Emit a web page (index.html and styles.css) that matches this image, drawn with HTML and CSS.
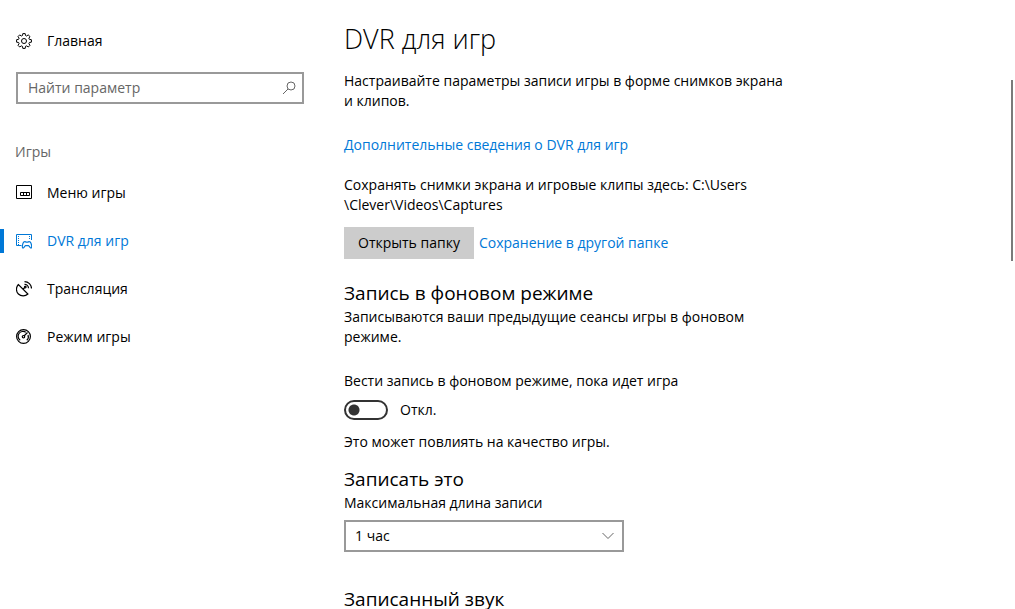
FILE: index.html
```
<!DOCTYPE html>
<html lang="ru">
<head>
    <meta charset="UTF-8">
    <title>Параметры</title>
    <link rel="stylesheet" href="styles.css">
</head>
<body>
<div class="wrap">
    <div class="side">
        <a href="#" class="item">
            <svg class="icon" viewBox="0 0 16 16"><path d="M6.8.6h2.4l.3 1.9 1.1.5 1.6-1.1 1.8 1.7-1.1 1.6.4 1.1 2.1.4v2.5l-2 .3-.5 1.2 1.1 1.6-1.7 1.7-1.6-1.1-1.2.4-.3 2.1H6.8l-.3-2-1.2-.5L3.7 14 2 12.300l1.100-1.600-.500-1.200-2-.300V6.700l2-.400.500-1.100L2 3.600l1.700-1.700L5.300 3l1.200-.5z"/><circle cx="8" cy="8" r="2.500"/></svg>
            <span>Главная</span>
        </a>
        <div class="search">
            <input type="text" placeholder="Найти параметр" aria-label="Найти параметр">
            <button type="button" aria-label="Поиск">
                <svg viewBox="0 0 14 14"><circle cx="9" cy="5" r="4"/><path d="M6 8L1 13"/></svg>
            </button>
        </div>
        <h3>Игры</h3>
        <ul>
            <li><a href="#" class="item">
                <svg class="icon" viewBox="0 0 16 16"><path d="M.5.5h15v13H.5zM4.500 7.500h9v3h-9zM7.500 7.500v3M10.500 7.500v3"/></svg>
                <span>Меню игры</span>
            </a></li>
            <li><a href="#" class="item on" aria-current="page">
                <svg class="icon" viewBox="0 0 16 16"><path d="M5.500 12.500H.5v-11h15V7"/><path d="M2.500 3v9M13.500 3v4" stroke-dasharray="1 1"/><path stroke-width="1.200" d="M6.800 15c-.9-.5-.3-4.800 1-6 .7-.6 1.700-.5 2.200.1h2c.5-.6 1.500-.7 2.200-.1 1.300 1.200 1.900 5.500 1 6-1 .4-1.800-2.100-2.700-2.300h-3c-.9.200-1.700 2.700-2.700 2.300z"/></svg>
                <span>DVR для игр</span>
            </a></li>
            <li><a href="#" class="item">
                <svg class="icon" viewBox="0 0 16 16" stroke-width="1.200"><path d="M2.400 3.500A6.700 6.700 0 0 0 11.900 13zM7 8.200L9 6.300M8.500 3.300a4 4 0 0 1 4 4M8.500.6a7 7 0 0 1 7 7"/><circle cx="9.300" cy="6.100" r=".8"/></svg>
                <span>Трансляция</span>
            </a></li>
            <li><a href="#" class="item">
                <svg class="icon" viewBox="0 0 16 16" stroke-width="1.200"><circle cx="7.500" cy="7.500" r="6.900"/><path d="M4.200 11.300A4.800 4.800 0 0 1 9.800 3.300M12 6A4.800 4.800 0 0 1 10.800 11.300M8 7l3.500-3.500"/><circle cx="7.500" cy="7.700" r="1.200"/></svg>
                <span>Режим игры</span>
            </a></li>
        </ul>
    </div>
    <div class="main">
        <h1>DVR для игр</h1>
        <p>Настраивайте параметры записи игры в форме снимков экрана и клипов.</p>
        <p class="more"><a href="#">Дополнительные сведения о DVR для игр</a></p>
        <p>Сохранять снимки экрана и игровые клипы здесь: C:\Users<wbr>\Clever\Videos\Captures</p>
        <div class="folder">
            <button type="button">Открыть папку</button>
            <a href="#">Сохранение в другой папке</a>
        </div>

        <h2>Запись в фоновом режиме</h2>
        <p>Записываются ваши предыдущие сеансы игры в фоновом режиме.</p>
        <label class="cap" for="bg">Вести запись в фоновом режиме, пока идет игра</label>
        <div class="toggle">
            <input type="checkbox" role="switch" id="bg">
            <span>Откл.</span>
        </div>
        <p>Это может повлиять на качество игры.</p>

        <h2 class="rec">Записать это</h2>
        <label for="len">Максимальная длина записи</label>
        <div class="select">
            <select id="len">
                <option>30 минут</option>
                <option selected>1 час</option>
                <option>2 часа</option>
            </select>
            <svg viewBox="0 0 12 8"><path d="M.5 1L6 6.500 11.500 1"/></svg>
        </div>

        <h2 class="last">Записанный звук</h2>
    </div>
    <div class="bar"></div>
</div>
</body>
</html>
```
FILE: styles.css
```
/* reset */
body,button,h1,h2,h3,input,p,select,ul{margin:0;padding:0}
body,button,input,select{font:14px/20px "Open Sans", "Noto Sans", sans-serif;color:#000;}
ul{list-style:none}
a{color:#0078d7;text-decoration:none}
button,input,select{box-sizing:border-box;border:0;border-radius:0;background:none;}
svg{fill:none;stroke:currentColor;}
body{background:#fff;}

.wrap{
    display:flex;
    height:100vh;
    overflow:hidden;
    position:relative;
}

/* left menu */
.side{
    width:320px;
    flex:none;
    padding-top:17px;
}
.item{
    display:flex;
    align-items:center;
    gap:15px;
    height:48px;
    padding-left:16px;
    color:#000;
}
.icon{
    width:16px;
    height:16px;
}
.item.on{
    color:#0078d7;
    background:linear-gradient(#0078d7,#0078d7) left center / 4px 24px no-repeat;
}
.search{
    display:flex;
    height:28px;
    margin:7px 16px 38px;
    border:2px solid #999;
}
.search input{
    flex:1;
    min-width:0;
    padding-left:10px;
}
.search input::placeholder{
    color:#666;
    opacity:1;
}
.search button{
    display:flex;
    align-items:center;
    justify-content:center;
    width:26px;
    color:#666;
}
.search svg{
    width:14px;
    height:14px;
}
.side h3{
    margin:0 15px 7px;
    font-size:14px;
    font-weight:400;
    color:#666;
}

/* page */
.main{
    flex:1;
    padding:21px 24px 0;
}
.main p{
    max-width:448px;
}
h1{
    margin-bottom:14px;
    font-size:27px;
    line-height:36px;
    font-weight:300;
}
h2{
    margin:22px 0 2px;
    font-size:19px;
    line-height:24px;
    font-weight:400;
}
.main .more{
    margin:24px 0 20px;
}
.folder{
    display:flex;
    align-items:center;
    gap:5px;
    margin-top:12px;
}
.folder button{
    height:32px;
    padding:0 14px;
    background:#ccc;
}
label{
    display:block;
}
.cap{
    margin-top:24px;
}
.toggle{
    display:flex;
    align-items:center;
    gap:12px;
    margin:9px 0 12px;
}
.toggle input{
    appearance:none;
    width:44px;
    height:20px;
    border:2px solid #333;
    border-radius:10px;
    background:radial-gradient(circle at 8px 8px,#333 5px,transparent 6px);
}
.toggle input:checked{
    background:radial-gradient(circle at 32px 8px,#333 5px,transparent 6px);
}
.rec{
    margin-top:15px;
}
.select{
    position:relative;
    width:280px;
    margin-top:7px;
}
.select select{
    appearance:none;
    display:block;
    width:100%;
    height:32px;
    padding-left:9px;
    border:2px solid #999;
}
.select svg{
    position:absolute;
    right:10px;
    top:12px;
    width:12px;
    height:8px;
    color:#666;
    pointer-events:none;
}
.last{
    margin-top:35px;
}

/* scroll thumb */
.bar{
    position:absolute;
    top:80px;
    right:2px;
    width:2px;
    height:181px;
    background:#7a7a7a;
}
```
